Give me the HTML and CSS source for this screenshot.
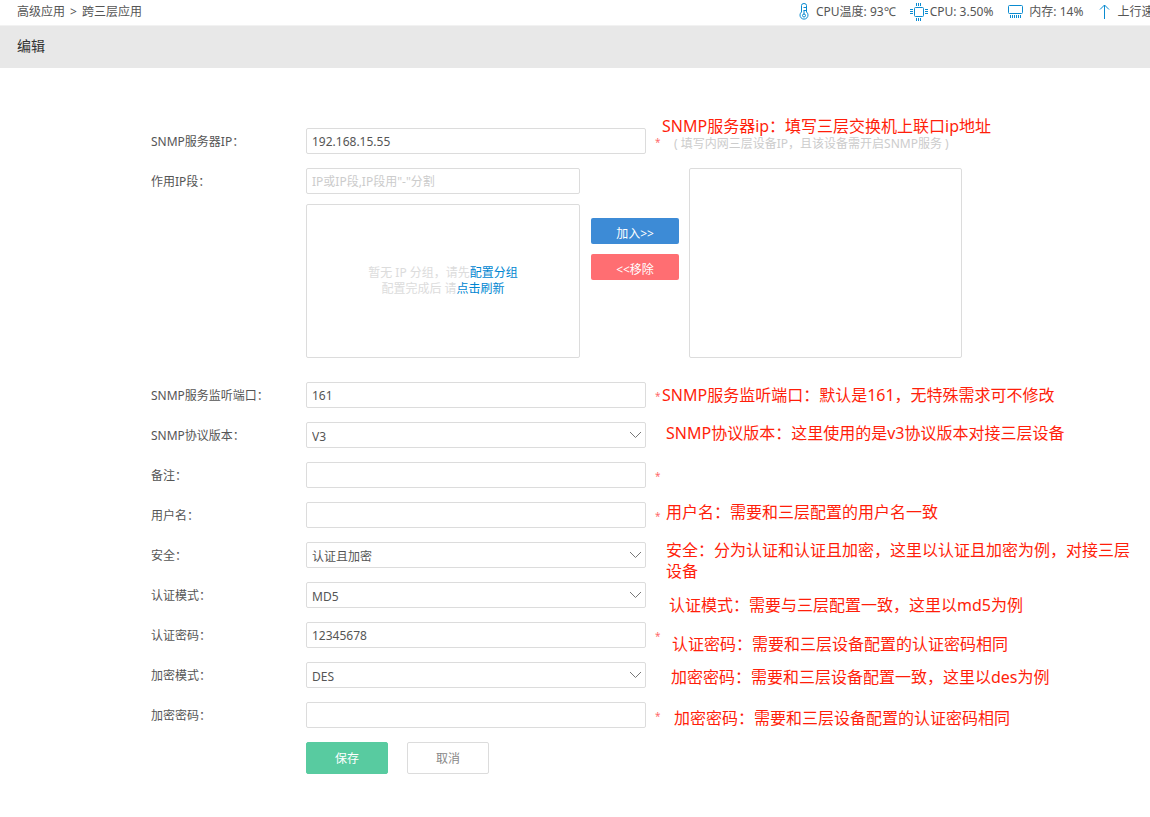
FILE: index.html
```html
<!DOCTYPE html>
<html lang="zh-CN">
<head>
    <meta charset="UTF-8">
    <meta name="viewport" content="width=device-width, initial-scale=1.0">
    <title>跨三层应用</title>
    <link rel="stylesheet" href="styles.css">
</head>
<body>
    <header class="topbar">
        <nav class="crumb"><span>高级应用</span><span>&gt;</span><span>跨三层应用</span></nav>
        <ul class="status">
            <li>
                <svg class="icon-temp" width="10" height="17" viewBox="0 0 10 17"><path d="M2.500 9V2.500a2.500 2 0 0 1 5 0V9a4 4 0 1 1-5 0z"/><path d="M4.500 4.500h3M4.500 7.500h3M5 7.500v4"/><circle cx="5" cy="12.500" r="1.500"/></svg>
                <span>CPU温度: 93℃</span>
            </li>
            <li>
                <svg class="icon-cpu" width="18" height="18" viewBox="0 0 18 18"><rect x="4.500" y="4.500" width="9" height="9" rx="1"/><path d="M6.500 0v3M8.500 0v3M10.500 0v3M6.500 15v3M8.500 15v3M10.500 15v3M0 6.500h3M0 8.500h3M0 10.500h3M15 6.500h3M15 8.500h3M15 10.500h3"/></svg>
                <span>CPU: 3.50%</span>
            </li>
            <li>
                <svg class="icon-mem" width="16" height="14" viewBox="0 0 16 14"><rect x=".5" y=".5" width="14" height="8" rx="1"/><path d="M2.500 10v3M4.500 10v3M6.500 10v3M8.500 10v3M10.500 10v3M12.500 10v3"/></svg>
                <span>内存: 14%</span>
            </li>
            <li>
                <svg class="icon-up" width="11" height="15" viewBox="0 0 11 15"><path d="M5.500 15V1M1 5.500l4.500-4.500L10 5.500"/></svg>
                <span>上行速</span>
            </li>
        </ul>
    </header>
    <h1 class="title">编辑</h1>

    <main class="content">
        <form class="form">
            <div class="row">
                <label class="name" for="server">SNMP服务器IP：</label>
                <input class="text" id="server" type="text" value="192.168.15.55">
                <span class="must">*</span>
                <span class="hint">( 填写内网三层设备IP，且该设备需开启SNMP服务 )</span>
            </div>
            <div class="row row-range">
                <label class="name" for="range">作用IP段：</label>
                <div class="source">
                    <input class="text" id="range" type="text" placeholder='IP或IP段,IP段用"-"分割'>
                    <div class="group">
                        <p>暂无 IP 分组，请先<a href="javascript:;">配置分组</a></p>
                        <p>配置完成后 请<a href="javascript:;">点击刷新</a></p>
                    </div>
                </div>
                <div class="move">
                    <button class="btn-add" type="button">加入&gt;&gt;</button>
                    <button class="btn-remove" type="button">&lt;&lt;移除</button>
                </div>
                <div class="chosen"></div>
            </div>
            <div class="row">
                <label class="name" for="port">SNMP服务监听端口：</label>
                <input class="text" id="port" type="text" value="161">
                <span class="must">*</span>
            </div>
            <div class="row">
                <label class="name" for="version">SNMP协议版本：</label>
                <div class="select">
                    <select id="version"><option>V3</option></select>
                    <svg width="13" height="8" viewBox="0 0 13 8"><path d="M1 1l5.500 5.500L12 1"/></svg>
                </div>
            </div>
            <div class="row">
                <label class="name" for="remark">备注：</label>
                <input class="text" id="remark" type="text">
                <span class="must">*</span>
            </div>
            <div class="row">
                <label class="name" for="user">用户名：</label>
                <input class="text" id="user" type="text">
                <span class="must">*</span>
            </div>
            <div class="row">
                <label class="name" for="safe">安全：</label>
                <div class="select">
                    <select id="safe"><option>认证且加密</option></select>
                    <svg width="13" height="8" viewBox="0 0 13 8"><path d="M1 1l5.500 5.500L12 1"/></svg>
                </div>
            </div>
            <div class="row">
                <label class="name" for="auth">认证模式：</label>
                <div class="select">
                    <select id="auth"><option>MD5</option></select>
                    <svg width="13" height="8" viewBox="0 0 13 8"><path d="M1 1l5.500 5.500L12 1"/></svg>
                </div>
            </div>
            <div class="row">
                <label class="name" for="authpwd">认证密码：</label>
                <input class="text" id="authpwd" type="text" value="12345678">
                <span class="must">*</span>
            </div>
            <div class="row">
                <label class="name" for="crypt">加密模式：</label>
                <div class="select">
                    <select id="crypt"><option>DES</option></select>
                    <svg width="13" height="8" viewBox="0 0 13 8"><path d="M1 1l5.500 5.500L12 1"/></svg>
                </div>
            </div>
            <div class="row">
                <label class="name" for="cryptpwd">加密密码：</label>
                <input class="text" id="cryptpwd" type="text">
                <span class="must">*</span>
            </div>
            <div class="actions">
                <button class="btn-save" type="button">保存</button>
                <button class="btn-cancel" type="button">取消</button>
            </div>
        </form>

        <!-- 红字批注，浮在表单上面 -->
        <p class="note note-server">SNMP服务器ip：填写三层交换机上联口ip地址</p>
        <p class="note note-port">SNMP服务监听端口：默认是161，无特殊需求可不修改</p>
        <p class="note note-version">SNMP协议版本：这里使用的是v3协议版本对接三层设备</p>
        <p class="note note-user">用户名：需要和三层配置的用户名一致</p>
        <p class="note note-safe">安全：分为认证和认证且加密，这里以认证且加密为例，对接三层设备</p>
        <p class="note note-auth">认证模式：需要与三层配置一致，这里以md5为例</p>
        <p class="note note-authpwd">认证密码：需要和三层设备配置的认证密码相同</p>
        <p class="note note-crypt">加密密码：需要和三层设备配置一致，这里以des为例</p>
        <p class="note note-cryptpwd">加密密码：需要和三层设备配置的认证密码相同</p>
    </main>
</body>
</html>
```
FILE: styles.css
```css
* {
    margin: 0;
    padding: 0;
    box-sizing: border-box;
}
body {
    background: #fff;
    color: #555;
    font: 12px/16px "Noto Sans", "Noto Sans CJK SC", sans-serif;
    overflow-x: hidden;
}
input, select, button {
    font: inherit;
    color: inherit;
}
a {
    color: #0086d1;
    text-decoration: none;
}

/* 顶部 */
.topbar {
    display: flex;
    align-items: center;
    height: 25px;
    padding: 0 0 2px 17px;
    overflow: hidden;
    white-space: nowrap;
}
.crumb {
    display: flex;
    flex: 0 0 782px;
    gap: 5px;
}
.status {
    display: flex;
    gap: 15px;
    list-style: none;
}
.status li {
    display: flex;
    flex: none;
    align-items: center;
    gap: 5px;
}
.status svg {
    flex: none;
    fill: none;
    stroke: #0a8bd0;
}
.status .icon-temp {
    margin-right: 2px;
}
.status .icon-cpu {
    margin: 0 -3px 0 -1px;
}
.status .icon-up {
    margin: 0 2px 0 1px;
}
.title {
    height: 43px;
    padding-left: 17px;
    border-top: 1px solid #f2f2f2;
    background: #e8e8e8;
    color: #333;
    font-size: 14px;
    font-weight: normal;
    line-height: 40px;
}

/* 表单 */
.content {
    position: relative;
    padding: 60px 0 40px 151px;
}
.row {
    display: flex;
    height: 26px;
    margin-bottom: 14px;
    line-height: 28px;
}
.name {
    flex: 0 0 155px;
}
.text, .select {
    width: 340px;
    height: 26px;
}
.text, .select select, .group, .chosen {
    border: 1px solid #dcdcdc;
    border-radius: 2px;
    background: #fff;
}
.text {
    padding: 1px 5px 0;
    outline: none;
}
.text::placeholder {
    color: #ccc;
    opacity: 1;
}
.select {
    position: relative;
}
.select select {
    width: 100%;
    height: 100%;
    padding: 0 5px;
    appearance: none;
    outline: none;
}
.select svg {
    position: absolute;
    top: 9px;
    right: 4px;
    fill: none;
    stroke: #777;
    pointer-events: none;
}
.must {
    width: 28px;
    padding-left: 9px;
    color: #ff6b6b;
    font-size: 10px;
}
.hint {
    color: #ccc;
    line-height: 32px;
}

/* IP段选择 */
.row-range {
    height: auto;
    margin-bottom: 24px;
}
.source {
    width: 274px;
}
.source .text {
    display: block;
    width: 100%;
    margin-bottom: 10px;
}
.group {
    display: flex;
    flex-direction: column;
    justify-content: center;
    height: 154px;
    color: #dcdcdc;
    line-height: 16px;
    text-align: center;
}
.move {
    display: flex;
    flex-direction: column;
    gap: 10px;
    width: 88px;
    margin: 50px 10px 0 11px;
}
.move button {
    height: 26px;
    padding-top: 2px;
    border: 0;
    border-radius: 2px;
    color: #fff;
}
.move .btn-add {
    background: #3d8bd6;
}
.move .btn-remove {
    background: #ff6e72;
}
.chosen {
    width: 273px;
}

/* 按钮 */
.actions {
    display: flex;
    gap: 19px;
    padding-left: 155px;
}
.actions button {
    width: 82px;
    height: 32px;
    padding-top: 2px;
    border: 1px solid #dcdcdc;
    border-radius: 2px;
    background: #fff;
    color: #888;
}
.actions .btn-save {
    border-color: #58cba0;
    background: #58cba0;
    color: #fff;
}

/* 批注 */
.note {
    position: absolute;
    color: #ff1e0a;
    font-size: 16px;
    line-height: 21px;
}
.note-server {
    left: 662px;
    top: 48px;
}
.note-port {
    left: 662px;
    top: 317px;
}
.note-version {
    left: 666px;
    top: 355px;
}
.note-user {
    left: 666px;
    top: 434px;
}
.note-safe {
    left: 666px;
    top: 472px;
    width: 470px;
}
.note-auth {
    left: 669px;
    top: 527px;
}
.note-authpwd {
    left: 672px;
    top: 566px;
}
.note-crypt {
    left: 671px;
    top: 599px;
}
.note-cryptpwd {
    left: 674px;
    top: 640px;
}
```
